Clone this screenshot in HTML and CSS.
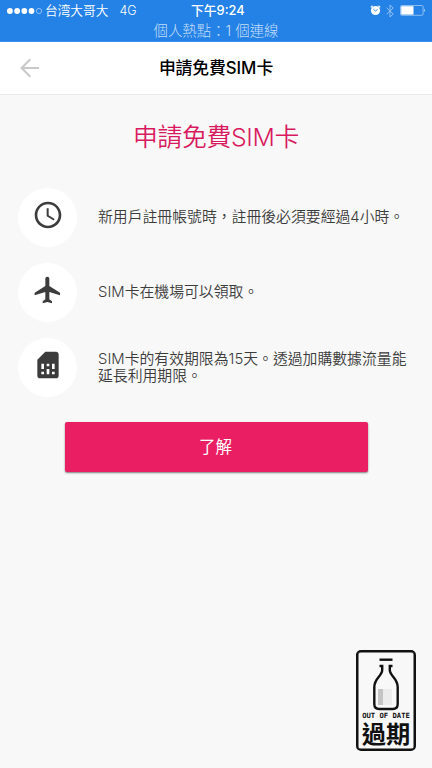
FILE: index.html
```html
<!DOCTYPE html>
<html lang="zh-Hant">
<head>
<meta charset="utf-8">
<meta name="viewport" content="width=device-width, initial-scale=1">
<title>申請免費SIM卡</title>
<link rel="stylesheet" href="styles.css">
</head>
<body>
<div class="status">
  <div class="status-row">
    <div class="carrier">
      <svg class="signal" width="36" height="8" viewBox="0 0 36 8" fill="#fff"><circle cx="2.9" cy="4" r="2.9"/><circle cx="10.1" cy="4" r="2.9"/><circle cx="17.3" cy="4" r="2.9"/><circle cx="24.5" cy="4" r="2.9"/><circle cx="32" cy="4" r="2.6" fill="none" stroke="#b9d8fa" stroke-width=".7"/></svg>
      <span class="operator">台湾大哥大</span><span class="network">4G</span>
    </div>
    <div class="time">下午9:24</div>
    <div class="indicators">
      <svg class="alarm" width="11" height="11" viewBox="0 0 11 11"><circle cx="5.500" cy="5.500" r="4.600" fill="#fff"/><path d="M.8 2.400 2.600 .8M10.200 2.400 8.400 .8" stroke="#fff" stroke-width="1.200"/><path d="M3.300 4.200 5.500 6 7.600 4.500" fill="none" stroke="#2481e5" stroke-width=".9"/></svg>
      <svg class="bluetooth" width="8" height="14" viewBox="0 0 8 14" fill="none" stroke="#8fc1f5" stroke-width="1"><path d="M.6 3.800 7.200 10 4 13V1l3.200 3L.6 10.200"/></svg>
      <svg class="battery" width="26" height="11" viewBox="0 0 26 11"><rect x=".5" y=".5" width="22.600" height="9.800" rx="1.200" fill="none" stroke="#a5cdf7" stroke-width=".8"/><path d="M1.200 1.200h12.300v8.400H1.200z" fill="#fff"/><path d="M24.100 3.600q1.500 1.800 0 3.600z" fill="#fff"/></svg>
    </div>
  </div>
  <div class="hotspot">個人熱點：1 個連線</div>
</div>
<header class="bar">
  <svg class="back" width="20" height="20" viewBox="0 0 20 20" fill="none" stroke="#c9c9c9" stroke-width="2"><path d="M19 10H2M10.300 1.300 1.600 10l8.700 8.700"/></svg>
  <div class="bar-title">申請免費SIM卡</div>
</header>
<main>
  <h1>申請免費SIM卡</h1>
  <ul class="steps">
    <li>
      <span class="disc"><svg width="32" height="32" viewBox="0 0 24 24" fill="#3c3c3c"><path d="M11.990 2C6.470 2 2 6.480 2 12s4.470 10 9.990 10C17.520 22 22 17.520 22 12S17.520 2 11.990 2zM12 20c-4.420 0-8-3.580-8-8s3.580-8 8-8 8 3.580 8 8-3.580 8-8 8z"/><path d="M12.500 7H11v6l5.250 3.150.75-1.230-4.500-2.670z"/></svg></span>
      <p>新用戶註冊帳號時，註冊後必須要經過4小時。</p>
    </li>
    <li>
      <span class="disc"><svg width="32" height="32" viewBox="0 0 24 24" fill="#3c3c3c"><path d="M21 16v-2l-8-5V3.500c0-.83-.67-1.500-1.500-1.500S10 2.670 10 3.500V9l-8 5v2l8-2.500V19l-2 1.500V22l3.500-1 3.500 1v-1.500L13 19v-5.500l8 2.500z"/></svg></span>
      <p>SIM卡在機場可以領取。</p>
    </li>
    <li>
      <span class="disc"><svg width="32" height="32" viewBox="0 0 24 24" fill="#3c3c3c"><path d="M19.990 4c0-1.100-.89-2-1.990-2h-8L4 8v12c0 1.100.9 2 2 2h12.010c1.100 0 1.990-.9 1.990-2l-.010-16zM9 19H7v-2h2v2zm8 0h-2v-2h2v2zm-8-4H7v-4h2v4zm4 4h-2v-4h2v4zm0-6h-2v-2h2v2zm4 2h-2v-4h2v4z"/></svg></span>
      <p class="double">SIM卡的有效期限為15天。透過加購數據流量能<br>延長利用期限。</p>
    </li>
  </ul>
  <button class="ok" type="button">了解</button>
</main>
<div class="stamp">
  <svg class="bottle" width="28" height="53" viewBox="0 0 28 53" fill="none" stroke="#111"><path d="M7.500 1.700h13" stroke-width="2.400"/><path d="M6 31h5v16H6z" fill="#c4c4c4" stroke="none"/><path d="M11 31h9v16h-9z" fill="#ececec" stroke="none"/><path d="M7.500 8h2.700v4c0 6-7.900 8-7.900 17v17q0 5 5 5h13.400q5 0 5-5v-17c0-9-7.900-11-7.900-17v-4h2.700" stroke-width="2.400"/></svg>
  <div class="stamp-en">OUT OF DATE</div>
  <div class="stamp-zh">過期</div>
</div>
</body>
</html>
```
FILE: styles.css
```css
* { box-sizing: border-box; }
body {
  margin: 0;
  height: 768px;
  overflow: hidden;
  background: #f8f8f8;
  color: #3c3c3c;
  font-family: Inter, "Noto Sans CJK TC", sans-serif;
}
svg { display: block; flex: none; }
.status {
  height: 42px;
  background: #2481e5;
  color: #fff;
  border-bottom: 1px solid #3b8fe8;
}
.status-row {
  display: grid;
  grid-template-columns: 191px 1fr 62px;
  height: 21px;
  align-items: center;
}
.carrier { display: flex; align-items: center; padding-left: 7px; }
.operator { margin-left: 2px; font-size: 12.700px; font-weight: 350; line-height: 21px; }
.network { margin-left: 11px; font-size: 12.500px; font-weight: 350; line-height: 21px; }
.time { font-size: 12.800px; font-weight: 500; line-height: 21px; white-space: nowrap; }
.indicators { display: flex; align-items: center; }
.bluetooth { margin-left: 5px; }
.battery { margin-left: 6px; }
.hotspot {
  height: 20px;
  line-height: 20px;
  font-size: 14.400px;
  font-weight: 300;
  text-align: center;
  color: #c3defb;
}
.bar {
  display: grid;
  grid-template-columns: 60px 1fr 60px;
  align-items: center;
  height: 53px;
  background: #fff;
  border-bottom: 1px solid #e8e8e8;
}
.back { margin-left: 20px; }
.bar-title {
  padding-bottom: 2px;
  text-align: center;
  font-size: 16.800px;
  font-weight: 500;
  letter-spacing: -.05px;
  color: #000;
}
main { display: flex; flex-direction: column; }
h1 {
  margin: 24px 0 0;
  height: 36px;
  line-height: 36px;
  text-align: center;
  font-size: 24.800px;
  font-weight: 350;
  letter-spacing: -.3px;
  color: #d81b60;
}
.steps {
  list-style: none;
  margin: 33px 0 0;
  padding: 0 0 0 18px;
  display: flex;
  flex-direction: column;
  gap: 16px;
}
.steps li { display: flex; align-items: center; height: 59px; }
.disc {
  display: flex;
  flex: none;
  align-items: center;
  justify-content: center;
  width: 59px;
  height: 59px;
  padding-bottom: 5px;
  border-radius: 50%;
  background: #fff;
}
.steps p {
  margin: 0 0 0 21px;
  padding-bottom: 2px;
  font-size: 14.850px;
  font-weight: 350;
  line-height: 16px;
  white-space: nowrap;
}
.steps .double { padding-bottom: 0; line-height: 16.500px; }
.ok {
  width: 303px;
  height: 50px;
  margin: 25px 0 0 65px;
  padding: 0 2px 0 0;
  border: 0;
  border-radius: 2px;
  background: #e91e63;
  box-shadow: 0 1px 2px rgba(0, 0, 0, .5);
  color: #fff;
  font: 400 16.500px/50px Inter, "Noto Sans CJK TC", sans-serif;
}
.stamp {
  position: absolute;
  left: 356px;
  top: 650px;
  width: 60px;
  height: 101px;
  padding-top: 6px;
  display: flex;
  flex-direction: column;
  align-items: center;
  border: 2px solid #111;
  border-radius: 5px;
  box-shadow: inset 0 0 0 .5px #111;
  color: #111;
}
.stamp-en {
  font: 700 7.200px/9px "DejaVu Sans Mono", monospace;
  white-space: nowrap;
}
.stamp-zh { margin-top: 2px; font-size: 24.300px; font-weight: 700; line-height: 24px; }
```
